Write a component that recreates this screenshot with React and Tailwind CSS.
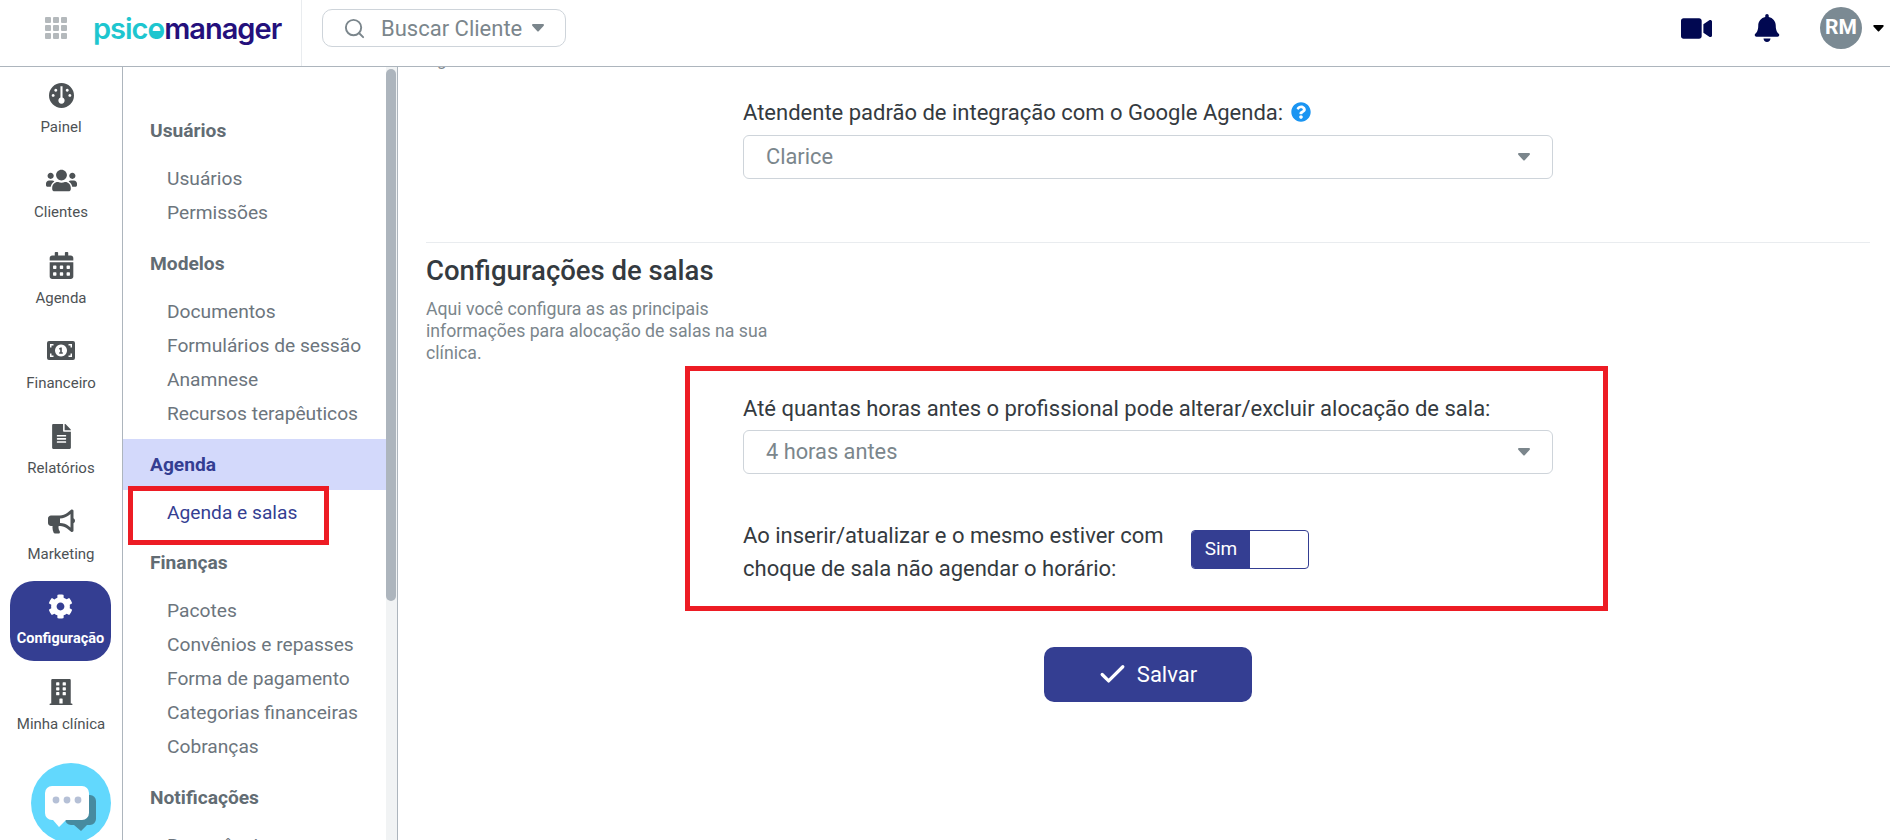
import { FaUsers, FaCalendarAlt, FaFileAlt, FaBullhorn, FaCog, FaBuilding, FaVideo, FaBell, FaQuestionCircle } from "react-icons/fa";
import { Search, Check } from "lucide-react";

function GaugeIcon() {
  return (
    <svg viewBox="0 0 24 24" className="w-[25px] h-[25px]" fill="#4d5255">
      <path fillRule="evenodd" d="M12 0a12 12 0 1 1 0 24a12 12 0 0 1 0-24zM11 3v11a3 3 0 1 0 2 0V3zM6.500 5.500a1.400 1.400 0 1 0 .01 0zM17.500 5.500a1.400 1.400 0 1 0 .01 0zM4 10.500a1.400 1.400 0 1 0 .01 0zM20 10.500a1.400 1.400 0 1 0 .01 0z" />
    </svg>
  );
}

function MoneyIcon() {
  return (
    <svg viewBox="0 0 28 19" className="w-[28px] h-[19px]" fill="#4d5255">
      <path fillRule="evenodd" d="M2 0h24a2 2 0 0 1 2 2v15a2 2 0 0 1-2 2H2a2 2 0 0 1-2-2V2a2 2 0 0 1 2-2zM14 3.500a6 6 0 1 0 .01 0zM3 3v3.500h1.500V4.500H6.500V3zM21.500 3v1.500h2V6.500H25V3zM3 12.500V16h3.500v-1.500H4.500v-2zM23.500 12.500v2h-2V16H25v-3.500z" />
      <path d="M13.200 6.500h1.600v6h-1.600zM12.200 7h1.600v1.400h-1.600zM12.200 11.300h3.600v1.400h-3.600z" />
    </svg>
  );
}

function GridIcon() {
  const cells = [0, 1, 2, 3, 4, 5, 6, 7, 8];
  return (
    <div className="grid grid-cols-3 gap-[2px] w-[22px]">
      {cells.map((c) => (
        <div key={c} className="w-[6px] h-[6px] rounded-[1px] bg-[#b4b9bc]" />
      ))}
    </div>
  );
}

function ChatIcon() {
  return (
    <svg viewBox="0 0 80 80" className="w-[80px] h-[80px]">
      <circle cx="40" cy="40" r="40" fill="#62d8fd" />
      <path d="M38 32h21a6 6 0 0 1 6 6v18a6 6 0 0 1-6 6h-3l-6 6l-7-6H40a6 6 0 0 1-6-6V36z" fill="#478ba0" />
      <path d="M21 23h30a7 7 0 0 1 7 7v20a7 7 0 0 1-7 7H35l-7 7l-6-7h-1a7 7 0 0 1-7-7V30a7 7 0 0 1 7-7z" fill="#fff" />
      <circle cx="25" cy="37" r="3.400" fill="#b5c0d6" />
      <circle cx="36" cy="37" r="3.400" fill="#b5c0d6" />
      <circle cx="47" cy="37" r="3.400" fill="#b5c0d6" />
    </svg>
  );
}

function Caret({ className }) {
  return (
    <svg viewBox="0 0 12 8" className={className} fill="currentColor">
      <path d="M1 0h10a1 1 0 0 1 .7 1.700l-5 5.500a1 1 0 0 1-1.400 0l-5-5.500A1 1 0 0 1 1 0z" />
    </svg>
  );
}

function Logo() {
  return (
    <div className="flex items-baseline font-['Inter',sans-serif] text-[29px] leading-none font-semibold tracking-[-1px]">
      <span className="text-[#1ec6cf]">
        psic
        <span className="relative">
          o
          <span className="absolute left-[3px] bottom-[8px] w-[11px] h-[7px] rounded-b-full bg-[#1ec6cf]" />
        </span>
      </span>
      <span className="text-[#24107c]">manager</span>
    </div>
  );
}

const railItems = [
  { label: "Painel", icon: <GaugeIcon /> },
  { label: "Clientes", icon: <FaUsers size={31} /> },
  { label: "Agenda", icon: <FaCalendarAlt size={27} /> },
  { label: "Financeiro", icon: <MoneyIcon /> },
  { label: "Relatórios", icon: <FaFileAlt size={25} /> },
  { label: "Marketing", icon: <FaBullhorn size={27} /> },
  { label: "Configuração", icon: <FaCog size={25} />, active: true },
  { label: "Minha clínica", icon: <FaBuilding size={26} /> },
];

const menu = [
  { title: "Usuários", items: ["Usuários", "Permissões"] },
  { title: "Modelos", items: ["Documentos", "Formulários de sessão", "Anamnese", "Recursos terapêuticos"] },
  { title: "Agenda", items: ["Agenda e salas"], active: true },
  { title: "Finanças", items: ["Pacotes", "Convênios e repasses", "Forma de pagamento", "Categorias financeiras", "Cobranças"] },
  { title: "Notificações", items: ["Recorrência"] },
];

function SelectBox({ value }) {
  return (
    <div className="h-[44px] w-[810px] border border-[#ced4da] rounded-[6px] flex items-center justify-between pl-[22px] pr-[22px] text-[21.8px] text-[#7b868c]">
      <span>{value}</span>
      <Caret className="w-[12px] h-[8px]" />
    </div>
  );
}

export default function App() {
  return (
    <div className="relative h-[840px] w-[1890px] overflow-hidden flex flex-col bg-white font-['Roboto',sans-serif]">
      {/* Top bar */}
      <header className="h-[67px] shrink-0 flex items-center border-b border-[#adb5bd]">
        <div className="w-[302px] h-full shrink-0 flex items-center border-r border-[#e9ecef] pl-[45px] pb-[10px]">
          <GridIcon />
          <div className="ml-[26px]">
            <Logo />
          </div>
        </div>
        <div className="h-full pb-[10px] flex items-center">
          <div className="ml-[20px] w-[244px] h-[38px] flex items-center border border-[#ced4da] rounded-[10px] pl-[20px] text-[22px] text-[#7b868c]">
            <Search size={23} strokeWidth={2} />
            <span className="ml-[15px]">Buscar Cliente</span>
            <Caret className="ml-[10px] w-[12px] h-[8px]" />
          </div>
        </div>
        <div className="ml-auto h-full pb-[10px] flex items-center text-[#010851]">
          <FaVideo size={31} />
          <FaBell size={28} className="ml-[41px]" />
          <div className="ml-[39px] w-[42px] h-[42px] rounded-full bg-[#7b8a93] text-white font-bold text-[21px] flex items-center justify-center">
            RM
          </div>
          <Caret className="ml-[10px] mr-[5px] w-[13px] h-[7px] text-black" />
        </div>
      </header>

      <div className="flex-1 flex min-h-0">
        {/* Icon rail */}
        <nav className="w-[123px] shrink-0 border-r border-[#adb5bd] flex flex-col items-center pt-[9px]">
          {railItems.map((item) => (
            <div
              key={item.label}
              className={
                item.active
                  ? "w-[101px] h-[80px] shrink-0 -mt-[7px] mb-[12px] -ml-[1px] pt-[11px] rounded-[24px] bg-[#343e92] text-white flex flex-col items-center"
                  : "w-[101px] h-[85.33px] shrink-0 text-[#4d5255] flex flex-col items-center"
              }
            >
              <div className={item.active ? "h-[30px] flex items-center justify-center" : "h-[38px] flex items-center justify-center"}>
                {item.icon}
              </div>
              <div className={item.active ? "mt-[7px] text-[14.5px] font-bold leading-[20px] whitespace-nowrap" : "mt-[3px] text-[15px] leading-[20px] whitespace-nowrap"}>
                {item.label}
              </div>
            </div>
          ))}
          <div className="mt-[5px] ml-[20px] shrink-0">
            <ChatIcon />
          </div>
        </nav>

        {/* Settings menu */}
        <aside className="w-[263px] shrink-0 pt-[46px] overflow-hidden">
          {menu.map((group) => (
            <div key={group.title} className={group.active ? "mb-[15px]" : "mb-[16px]"}>
              <div
                className={
                  group.active
                    ? "h-[51px] flex items-center pl-[27px] pt-[2px] -mt-[8px] bg-[#d3d9fb] text-[19.2px] font-bold text-[#343e92]"
                    : "h-[36px] flex items-center pl-[27px] text-[19.2px] font-bold text-[#626c73]"
                }
              >
                {group.title}
              </div>
              <div className={group.active ? "mt-[6px]" : "mt-[13px]"}>
                {group.items.map((it) => (
                  <div
                    key={it}
                    className={group.active ? "h-[34px] flex items-center pl-[44px] text-[19.2px] text-[#343e92]" : "h-[34px] flex items-center pl-[44px] text-[19.2px] text-[#6c757d]"}
                  >
                    {it}
                  </div>
                ))}
              </div>
            </div>
          ))}
        </aside>

        {/* Scrollbar */}
        <div className="w-[12px] shrink-0 bg-[#f1f3f4] border-r border-[#adb5bd]">
          <div className="w-[10px] h-[532px] mt-[2px] rounded-full bg-[#adb5bd]" />
        </div>

        {/* Content */}
        <main className="flex-1 min-w-0 overflow-hidden pl-[28px] pr-[20px] text-[#343a40]">
          <div className="-mt-[18px] h-[22px] text-[17px] leading-[22px] text-[#7b868c]">Agenda</div>

          <div className="ml-[317px] mt-[28px]">
            <div className="h-[26px] flex items-center text-[22px]">
              Atendente padrão de integração com o Google Agenda:
              <FaQuestionCircle size={20} className="ml-[8px] text-[#1b95f2]" />
            </div>
            <div className="mt-[10px]">
              <SelectBox value="Clarice" />
            </div>
          </div>

          <div className="mt-[63px] border-t border-[#e9ecef]" />
          <h2 className="mt-[11px] text-[27.5px] leading-[34px] font-medium">Configurações de salas</h2>
          <p className="mt-[10px] w-[372px] text-[17.7px] leading-[22px] text-[#7b868c]">
            Aqui você configura as as principais informações para alocação de salas na sua clínica.
          </p>

          <div className="ml-[317px] mt-[31px]">
            <div className="h-[26px] flex items-center text-[22px]">
              Até quantas horas antes o profissional pode alterar/excluir alocação de sala:
            </div>
            <div className="mt-[9px]">
              <SelectBox value="4 horas antes" />
            </div>
            <div className="mt-[45px] flex items-start">
              <div className="w-[448px] text-[22px] leading-[33px]">
                Ao inserir/atualizar e o mesmo estiver com choque de sala não agendar o horário:
              </div>
              <div className="mt-[11px] w-[118px] h-[39px] flex rounded-[4px] border border-[#343e92] overflow-hidden text-[19px]">
                <div className="w-[58px] bg-[#343e92] text-white flex items-center justify-center">Sim</div>
              </div>
            </div>
          </div>

          <div className="mt-[62px] flex justify-center">
            <button className="w-[208px] h-[55px] rounded-[10px] bg-[#343e92] text-white text-[22px] flex items-center justify-center">
              <Check size={31} strokeWidth={2.5} className="mr-[9px] -ml-[2px]" />
              Salvar
            </button>
          </div>
        </main>
      </div>

      {/* Red highlight boxes */}
      <div className="absolute left-[128px] top-[486px] w-[201px] h-[59px] border-[5px] border-[#ed1c24] pointer-events-none" />
      <div className="absolute left-[685px] top-[366px] w-[923px] h-[245px] border-[5px] border-[#ed1c24] pointer-events-none" />
    </div>
  );
}
